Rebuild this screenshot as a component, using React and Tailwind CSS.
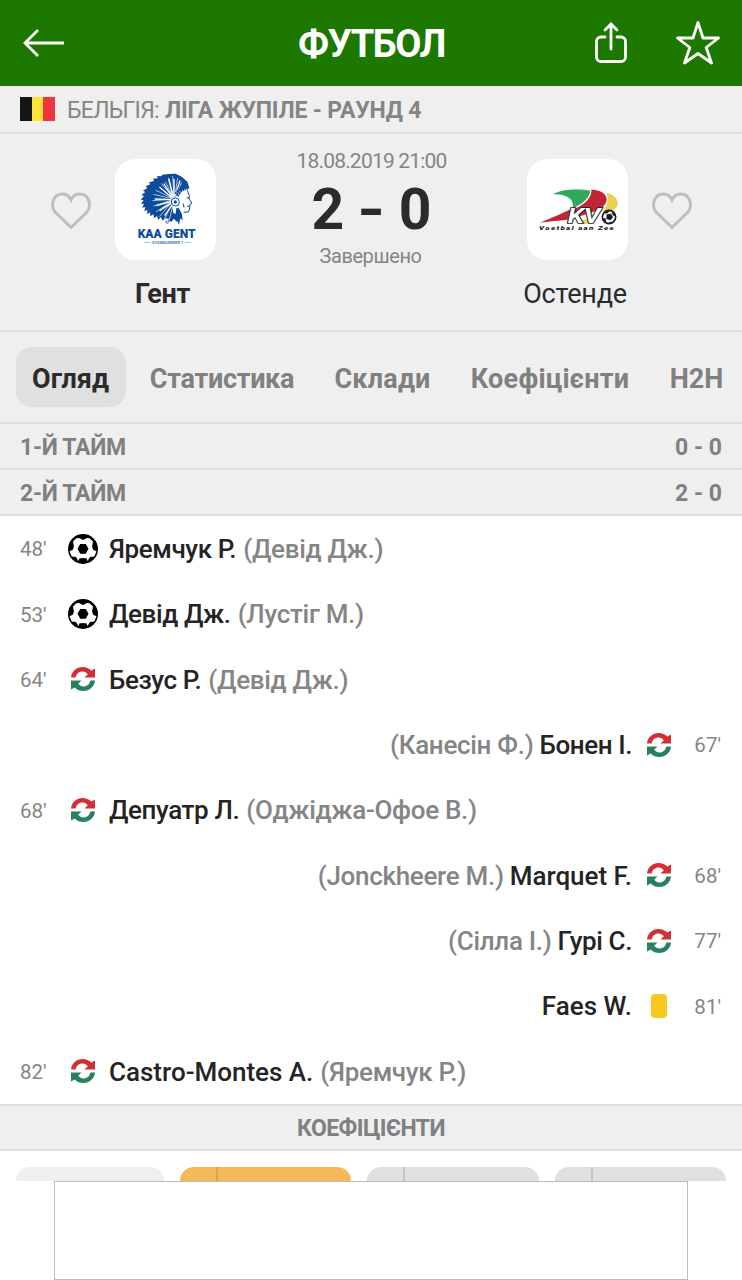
import React from "react";

const TABS = [
  { label: "Огляд", className: "w-[110px] bg-[#e0e0e0] text-[#2b2b2b] pr-px" },
  { label: "Статистика", className: "ml-6 w-[144px] tracking-[-0.3px]" },
  { label: "Склади", className: "ml-10 w-[97px] tracking-[0.2px]" },
  { label: "Коефіцієнти", className: "ml-[39px] w-[160px] tracking-[0.25px]" },
  { label: "H2H", className: "ml-[39px] w-[55px]" },
];

const EVENTS = [
  { time: "48'", type: "goal", side: "home", player: "Яремчук Р.", other: "(Девід Дж.)" },
  { time: "53'", type: "goal", side: "home", player: "Девід Дж.", other: "(Лустіг М.)" },
  { time: "64'", type: "sub", side: "home", player: "Безус Р.", other: "(Девід Дж.)" },
  { time: "67'", type: "sub", side: "away", player: "Бонен І.", other: "(Канесін Ф.)" },
  { time: "68'", type: "sub", side: "home", player: "Депуатр Л.", other: "(Оджіджа-Офое В.)" },
  { time: "68'", type: "sub", side: "away", player: "Marquet F.", other: "(Jonckheere M.)", latin: true },
  { time: "77'", type: "sub", side: "away", player: "Гурі С.", other: "(Сілла І.)" },
  { time: "81'", type: "card", side: "away", player: "Faes W.", other: "", latin: true },
  { time: "82'", type: "sub", side: "home", player: "Castro-Montes A.", other: "(Яремчук Р.)", latin: true },
];

const BackIcon = () => (
  <svg className="ml-px h-[28px] w-[42px]" viewBox="0 0 42 28" fill="none" stroke="white" strokeWidth="2.8">
    <path d="M41 14H2M15 1 2 14l13 13" />
  </svg>
);

const ShareIcon = () => (
  <svg className="h-[42px] w-[32px]" viewBox="0 0 32 42" fill="none" stroke="white" strokeWidth="2.8" strokeLinecap="round">
    <path d="M10 15H6a4.500 4.500 0 0 0-4.500 4.500V35A4.500 4.500 0 0 0 6 39.500h20a4.500 4.500 0 0 0 4.500-4.500V19.500A4.500 4.500 0 0 0 26 15h-4" />
    <path d="M16 27V2M10 8l6-6 6 6" />
  </svg>
);

const StarIcon = () => (
  <svg className="h-[44px] w-[46px]" viewBox="0 0 46 44" fill="none" stroke="white" strokeWidth="2.8" strokeLinejoin="round">
    <path d="M23 1.500 28 17H43.500L31.200 26.500 36.500 42 23 32.500 9.500 42l5.300-15.500L2.500 17H18Z" />
  </svg>
);

const HeartIcon = () => (
  <svg className="h-[38px] w-[40px]" viewBox="0 0 40 38" fill="none" stroke="#bdbdbd" strokeWidth="2.8">
    <path d="M20 35.500 4.500 20.500C-.8 14.500 1.200 2 11.500 2 15.500 2 18.500 4.500 20 8c1.500-3.500 4.500-6 8.500-6C38.800 2 40.800 14.500 35.500 20.500Z" />
  </svg>
);

const BallIcon = () => (
  <svg className="h-[30px] w-[30px]" viewBox="0 0 30 30">
    <circle cx="15" cy="15" r="15" fill="black" />
    <path
      fill="white"
      d="M8.500 4.300 11 4l4 2 4-2 2.500.3 3.500 3.200-.9 5 1.100 3.300 3.300 1.400-2.200 5.300-4.300.5-2.500 4L15 24l-4.500 3-2.500-4-4.300-.5-2.200-5.300 3.300-1.400 1.100-3.300-.9-5Z"
    />
    <path fill="black" d="M12.200 10h5.600l2.700 4.700-2.700 5h-5.600l-2.700-5ZM11.500 24.200h7l1.500 4h-10Z" />
  </svg>
);

const SubIcon = () => (
  <svg className="h-[24px] w-[24px]" viewBox="0 0 24 24">
    <path fill="#d32f36" d="M0 10.500C.5 4.500 5.500 0 11.500 0c3.600 0 6.600 1.300 8.800 3.600L24 1.500v9H13.500l3.300-3.300C15.500 5.700 13.800 4.500 11.500 4.500 8 4.500 5.200 7 4.700 10.500Z" />
    <path fill="#27825b" d="M24 13.500C23.500 19.500 18.500 24 12.500 24c-3.600 0-6.600-1.300-8.800-3.600L0 22.500v-9h10.500l-3.300 3.300c1.300 1.500 3 2.700 5.300 2.700 3.500 0 6.300-2.500 6.800-6Z" />
  </svg>
);

const CardIcon = () => <div className="h-[24px] w-[16px] rounded-[4px] bg-[#f9c81e]" />;

const GentLogo = () => (
  <svg className="h-[101px] w-[101px]" viewBox="0 0 303 303">
    <path
      fill="#0d4c9b"
      d="m160 45-18 2-3 5-13-1 2 7-14 1 3 7-15 4 4 6-14 6 5 5-13 8 7 4-12 9 8 3-10 11 9 1-8 12 9-1-5 12 9-2-3 12 9-3-1 12 9-5 1 12 9-6 3 12 8-7 4 12 7-9 6 11 9-9 8 2 8 12 9-11 8 10 4-17 8-4 4-60 22-22-6-18-17-15-18-9Z"
    />
    <path fill="white" d="m180 118 14-22 20-8 4 12 5 12-1 10 7 9-4 5-2 12-4 8-18 1-9 12-17-7-4-28Z" />
    <g stroke="white" strokeWidth="2" fill="none">
      <path d="M178 121 132 83M178 121 139 73M178 121l-27-53M178 121l-17-65M178 121l-5-69M178 121l10-64M178 121l22-51M178 121 121 93M178 121l-62-15M178 121l-66 4M178 121l-62 20M178 121l-55 38M178 121l-45 52M178 121l-30 60M178 121l-15 62" />
    </g>
    <g stroke="white" strokeWidth="4" fill="none">
      <path d="M171 116 134 85M172 113 146 74M174 112l-13-52M177 111V60M181 109l14-45M170 122l-51-2M170 127l-46 13M171 131l-37 24M174 134l-25 36" />
    </g>
    <path stroke="#0d4c9b" strokeWidth="7" strokeDasharray="6 2" fill="none" d="m181 105 15-20 15-7M187 111l12-16 14-6" />
    <circle cx="181" cy="129" r="12" fill="white" stroke="#0d4c9b" strokeWidth="3" />
    <circle cx="181" cy="129" r="5" fill="#0d4c9b" />
    <path fill="none" stroke="#0d4c9b" strokeWidth="3" d="m217 94 6 16-1 10 9 12-6 4-1 14-4 9-14 1M215 117l8-1M216 142l8-1M205 134l2 12" />
    <path fill="#0d4c9b" d="m184 147 8 1 9 18 2 18-7-6-4 19-11-23Z" />
    <path fill="none" stroke="#0d4c9b" strokeWidth="2" d="M150 180q10-4 13 5l-5 9-7-5 14-5" />
    <text x="68" y="236" textLength="174" lengthAdjust="spacingAndGlyphs" fill="#0d4c9b" className="font-['Roboto'] text-[36px] font-black">
      KAA GENT
    </text>
    <path stroke="#7fa0cb" strokeWidth="2" d="M87 250h20M208 250h20" />
    <text x="111" y="255" textLength="94" lengthAdjust="spacingAndGlyphs" fill="#4f7cb5" className="font-['Roboto'] text-[12px] font-bold">
      STAMNUMMER 7
    </text>
  </svg>
);

const OostendeLogo = () => (
  <svg className="h-[101px] w-[101px]" viewBox="0 0 303 303">
    <path fill="#2eaa5c" d="M78 105C105 90 155 88 192 95c-2 25-26 43-56 55 8-25-10-44-58-45Z" />
    <path fill="#c22537" d="M192 92c18 0 35 5 43 17 12 18-5 36-18 43l-84 29c-35 5-70 6-96 11 38-15 74-31 105-47 31-15 50-32 50-53Z" />
    <path fill="none" stroke="white" strokeWidth="4" d="M192 94c-2 25-26 44-58 57" />
    <path fill="#ead04f" d="M238 101c21 4 34 17 34 32 0 12-8 19-18 24h-28c14-15 22-34 12-56Z" />
    <path fill="#ead04f" d="m168 184 25-8-7 18h-23Z" />
    <text x="122" y="192" textLength="98" lengthAdjust="spacingAndGlyphs" fill="white" stroke="#1c1c1c" strokeWidth="5" paintOrder="stroke" className="font-['Roboto'] text-[58px] font-bold italic">
      KV
    </text>
    <circle cx="246" cy="174" r="20" fill="white" stroke="#1c1c1c" strokeWidth="5" />
    <path fill="#1c1c1c" d="m239 166 13-2 6 11-8 9-12-4ZM232 160l10-6 5 4-10 7ZM258 160l7 10-5 2-6-10ZM227 177l8 1 3 9-4 3ZM246 189l10-1-5 7Z" />
    <text x="36" y="213" textLength="228" lengthAdjust="spacingAndGlyphs" fill="#1c1c1c" className="font-['Roboto'] text-[18px] font-black tracking-[3px] italic">
      Voetbal aan Zee
    </text>
  </svg>
);

const EventIcon = ({ type }) => {
  switch (type) {
    case "goal":
      return <BallIcon />;
    case "card":
      return <CardIcon />;
    default:
      return <SubIcon />;
  }
};

const EventRow = ({ event }) => {
  const away = event.side === "away";
  return (
    <div className={`flex h-[65.33px] items-center text-[26px] ${away ? "flex-row-reverse pr-[21px] pl-5" : "px-5"}`}>
      <div className={`w-[41px] pt-0.5 text-[20.5px] text-[#858585] ${away ? "text-right" : ""}`}>{event.time}</div>
      <div className="flex w-[43px] justify-center">
        <EventIcon type={event.type} />
      </div>
      <div className={`flex pt-0.5 whitespace-nowrap ${away ? "mr-[5px] flex-row-reverse gap-[6px]" : "ml-[5px] gap-[7px]"}`}>
        <span className={`font-medium text-[#242424] ${event.latin ? "" : "tracking-[-0.4px]"}`}>{event.player}</span>
        {event.other && <span className="font-medium tracking-[-0.3px] text-[#858585]">{event.other}</span>}
      </div>
    </div>
  );
};

const PeriodRow = ({ name, score }) => (
  <div className="flex h-[46px] items-center justify-between border-b-2 border-[#dedede] px-5 pt-1 text-[23px] font-bold text-[#808080]">
    <span className="tracking-[-0.3px]">{name}</span>
    <span>{score}</span>
  </div>
);

const Team = ({ name, children, className, nameClass }) => (
  <div className={`flex w-[101px] flex-col items-center ${className}`}>
    <div className="h-[101px] w-[101px] overflow-hidden rounded-[20px] bg-white">{children}</div>
    <div className={`mt-4 text-[27px] leading-9 whitespace-nowrap text-[#2b2b2b] ${nameClass}`}>{name}</div>
  </div>
);

const OddsPill = ({ className, line }) => (
  <div className={`h-[60px] rounded-[14px] ${className}`}>
    {line && <div className={`h-full border-r-2 ${line}`} />}
  </div>
);

const App = () => {
  return (
    <div className="relative h-[1280px] w-[742px] overflow-hidden bg-white font-['Roboto',sans-serif]">
      <header className="grid h-[86px] grid-cols-3 items-center bg-[#1d7800] pr-[21px] pl-[22px]">
        <BackIcon />
        <h1 className="pt-0.5 text-center text-[38px] font-bold tracking-[-1.4px] text-white">ФУТБОЛ</h1>
        <div className="flex items-center justify-end gap-[48px]">
          <ShareIcon />
          <StarIcon />
        </div>
      </header>

      <div className="flex h-[48px] items-center border-b-2 border-[#e0e0e0] bg-[#efefef] px-5 text-[23px] text-[#858585]">
        <div className="flex h-[24px] w-[35px]">
          <div className="flex-1 bg-[#151515]" />
          <div className="flex-1 bg-[#fce338]" />
          <div className="flex-1 bg-[#ee3540]" />
        </div>
        <span className="ml-3 pt-[5px] tracking-[-0.7px]">БЕЛЬГІЯ:</span>
        <span className="ml-1.5 pt-[5px] font-bold tracking-[-0.2px]">ЛІГА ЖУПІЛЕ - РАУНД 4</span>
      </div>

      <section className="flex h-[198px] items-start border-b-2 border-[#dedede] bg-[#efefef] pt-[25px] pr-[50px] pl-[51px]">
        <div className="mt-[33px]">
          <HeartIcon />
        </div>
        <Team name={<b>Гент</b>} className="ml-6" nameClass="-ml-1.5 tracking-[-0.3px]">
          <GentLogo />
        </Team>
        <div className="flex flex-1 flex-col items-center leading-6 text-[#858585]">
          <div className="-mt-2.5 text-[21px] tracking-[-0.8px]">18.08.2019 21:00</div>
          <div className="mt-[10px] mb-[7px] text-[57px] leading-[54px] font-bold text-[#2b2b2b]">
            <span>2</span>
            <span className="mx-[16px] inline-block scale-x-125">-</span>
            <span>0</span>
          </div>
          <div className="pr-0.5 text-[20px] tracking-[-0.4px]">Завершено</div>
        </div>
        <Team name="Остенде" className="mr-6" nameClass="-ml-[5px] tracking-[-0.2px]">
          <OostendeLogo />
        </Team>
        <div className="mt-[33px]">
          <HeartIcon />
        </div>
      </section>

      <nav className="flex h-[92px] items-center border-b-2 border-[#dedede] bg-[#efefef] pl-4 text-[27px] font-bold text-[#808080]">
        {TABS.map((tab) => (
          <div key={tab.label} className={`flex h-[60px] shrink-0 items-center justify-center rounded-2xl pt-1 whitespace-nowrap ${tab.className}`}>
            {tab.label}
          </div>
        ))}
      </nav>

      <div className="bg-[#efefef]">
        <PeriodRow name="1-Й ТАЙМ" score="0 - 0" />
        <PeriodRow name="2-Й ТАЙМ" score="2 - 0" />
      </div>

      <div>
        {EVENTS.map((event, i) => (
          <EventRow key={i} event={event} />
        ))}
      </div>

      <div className="flex h-[47px] items-center justify-center border-y-2 border-[#dedede] bg-[#efefef] pt-1 text-[23px] font-bold tracking-[-0.6px] text-[#808080]">
        КОЕФІЦІЄНТИ
      </div>

      <div className="flex gap-4 px-4 pt-4">
        <OddsPill className="w-[148px] bg-[#efefef]" />
        <OddsPill className="w-[171px] bg-[#f6b958]" line="w-[38px] border-[#dca54c]" />
        <OddsPill className="w-[172px] bg-[#e0e0e0]" line="w-[38px] border-[#c4c4c4]" />
        <OddsPill className="w-[171px] bg-[#e0e0e0]" line="w-[38px] border-[#c4c4c4]" />
      </div>

      {/* ad slot */}
      <div className="absolute inset-x-0 bottom-0 flex h-[99px] justify-center bg-white">
        <div className="h-full w-[634px] border border-[#bcbcbc]" />
      </div>
    </div>
  );
};

export default App;
